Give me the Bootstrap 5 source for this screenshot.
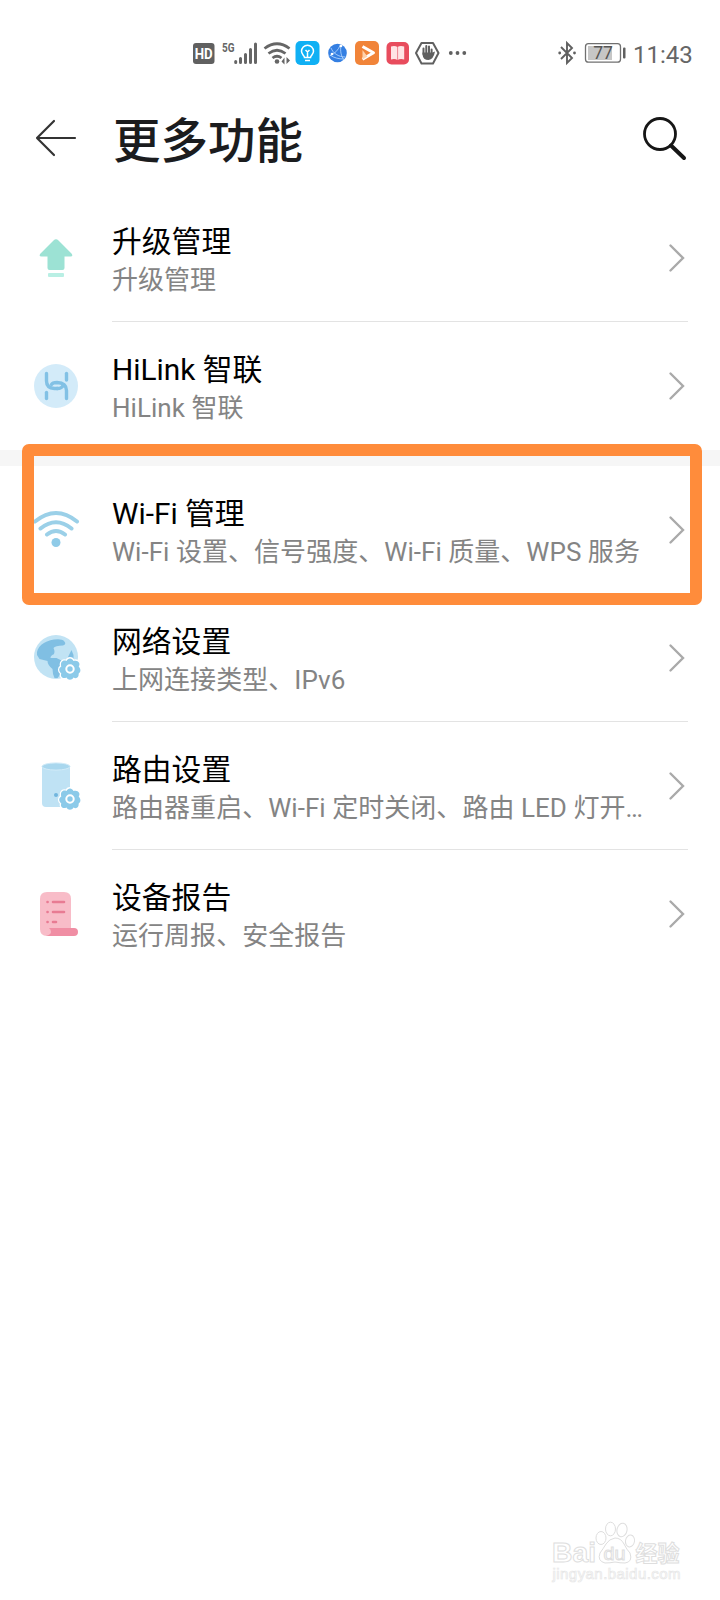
<!DOCTYPE html>
<html lang="zh-CN">
<head>
<meta charset="utf-8">
<meta name="viewport" content="width=device-width, initial-scale=1">
<title>更多功能</title>
<link rel="stylesheet" href="https://cdn.jsdelivr.net/npm/bootstrap@5.3.0/dist/css/bootstrap.min.css">
<style>
body{font-family:Roboto,"Noto Sans CJK SC",sans-serif;background:#fff;color:#000}
.screen{height:1600px;width:720px}
svg{display:block;flex:none}
.status-bar{height:106px;padding-left:192px;padding-right:28px;color:#666}
.clock{font-size:24px;line-height:28px;color:#666;width:59px;white-space:nowrap;padding-top:3px}
.title-bar{height:64px;margin-bottom:24px;padding-left:32px;padding-right:28px}
.title-bar h1{font-size:47.5px;line-height:60px;font-weight:500;color:#1b1c1e;margin-left:35px;padding-top:8px}
.item{height:128px;padding:0 32px}
.item-icon{width:80px;height:128px}
.item-body{border-bottom:1px solid #e3e3e3;padding-top:29px}
.item.plain .item-body{border-color:transparent}
.item-title{font-size:29.8px;line-height:38px;white-space:nowrap}
.item-sub{font-size:26px;line-height:38px;letter-spacing:.04px;color:#848484;white-space:nowrap}
.chev{margin-top:-1px}
.band{height:16px;background:#f6f6f6}
.marker{left:-10px;right:-14px;top:-22px;height:161px;border:12px solid #ff8c3b;border-radius:7px;pointer-events:none}
.marker-host{margin:0 32px;height:128px}
.marker-host .item{padding:0}
.brand{padding-right:30px;padding-bottom:10px}
</style>
</head>
<body>
<div class="screen d-flex flex-column overflow-hidden">
  <header class="status-bar d-flex align-items-center">
    <svg width="28" height="30" viewBox="192 38 28 30"><rect x="193" y="43" width="21.5" height="21" rx="3" fill="#606060"/><text x="203.7" y="59" text-anchor="middle" font-size="15" font-weight="700" textLength="18" lengthAdjust="spacingAndGlyphs" fill="#fff">HD</text></svg>
    <svg width="40" height="30" viewBox="220 38 40 30"><text x="222" y="51.500" font-size="12.5" font-weight="700" textLength="12.5" lengthAdjust="spacingAndGlyphs" fill="#666">5G</text><path d="M235.700 61.500v1M240.500 58.500v4M245.500 54.500v8M250.500 49.500v13M255.500 44v18.500" stroke="#666" stroke-width="3" stroke-linecap="round"/></svg>
    <svg width="34" height="30" viewBox="260 38 34 30"><g fill="none" stroke="#666" stroke-width="2.800"><path d="M264.500 48.500q12.500-9.500 25 0M268.500 53.500q8.500-6.500 17 0M272.500 58q4.500-3.500 9 0"/></g><circle cx="277" cy="61.500" r="2.300" fill="#666"/><path d="M284.500 57.500v7l-3-3zM286.500 64v-7l3.500 3.500z" fill="#666"/></svg>
    <svg width="30" height="30" viewBox="294 38 30 30"><rect x="295.500" y="41" width="24" height="24" rx="5" fill="#10b0f4"/><g fill="none" stroke="#fff" stroke-width="1.500"><path d="M304.500 57.500c0-2-3-3-3-6.200a6 6 0 0 1 12 0c0 3.200-3 4.200-3 6.200zM307.500 57v-5M305.500 50l2 2 2-2M305 60.500h5"/></g></svg>
    <svg width="28" height="30" viewBox="324 38 28 30"><circle cx="337.500" cy="53" r="9.300" fill="#347fe2"/><path d="M329.500 56c5-2 9-6 11-11.500M331 48c2 5 7 9 14.500 9M341 45c-1 6 0 11 3 15M330 55c4 3 9 4 14 4" stroke="#b9dbff" stroke-width=".8" fill="none"/><circle cx="341" cy="46" r="1.300" fill="#fff"/><circle cx="332" cy="54" r="1.300" fill="#fff"/></svg>
    <svg width="31" height="30" viewBox="352 38 31 30"><rect x="355" y="41" width="24" height="24" rx="5" fill="#f18439"/><path d="M362.500 46.500l11 6.300-11 6.400" fill="none" stroke="#fff" stroke-width="3" stroke-linejoin="round"/><path d="M362.500 50v9.500l5-3" fill="#ffd2ac"/></svg>
    <svg width="30" height="30" viewBox="383 38 30 30"><rect x="386.500" y="42" width="22.500" height="22.500" rx="5" fill="#e84c5d"/><path d="M391 46.500q4-1 6.500.5 2.500-1.500 6.700-.5v13q-4-1-6.700.5-2.500-1.500-6.500-.5z" fill="#ffe4e5"/><path d="M397.600 47v13" stroke="#ee8590"/></svg>
    <svg width="31" height="30" viewBox="413 38 31 30"><path d="M421.500 43h11.500l5.500 10-5.500 10.500h-11.500L416 53z" fill="none" stroke="#606060" stroke-width="2" stroke-linejoin="round"/><path d="M423.500 54v-5.500M426.300 53v-7M429 53v-6.500M431.600 54v-4.500" stroke="#606060" stroke-width="2" stroke-linecap="round"/><path d="M422.500 52.500h10l2.500-1q-1.500 8-6.500 8.500-5.500 0-6-5.500z" fill="#606060"/></svg>
    <svg width="26" height="30" viewBox="444 38 26 30" fill="#606060"><circle cx="450.800" cy="53" r="1.900"/><circle cx="457.500" cy="53" r="1.900"/><circle cx="464.300" cy="53" r="1.900"/></svg>
    <svg class="ms-auto" width="26" height="30" viewBox="555 38 26 30"><path d="M561 47l11 11-5 5V43l5 5-11 11" fill="none" stroke="#606060" stroke-width="1.900"/><circle cx="559.700" cy="53" r="1.400" fill="#606060"/><circle cx="574.500" cy="53" r="1.400" fill="#606060"/></svg>
    <svg width="52" height="30" viewBox="581 38 52 30"><rect x="585.500" y="43.700" width="35" height="18.500" rx="3" fill="#fff" stroke="#707070" stroke-width="1.300"/><rect x="588" y="46" width="24" height="14" fill="#c6c6c6"/><rect x="623" y="47.500" width="2.500" height="11" rx="1" fill="#606060"/><text x="603" y="59.300" text-anchor="middle" font-size="17.500" fill="#555">77</text></svg>
    <div class="clock">11:43</div>
  </header>

  <div class="title-bar d-flex align-items-center">
    <svg width="46" height="46" viewBox="32 115 46 46"><path d="M54 121L37 138l17 17M37 138h38" fill="none" stroke="#333" stroke-width="2.200" stroke-linecap="round" stroke-linejoin="round"/></svg>
    <h1 class="mb-0">更多功能</h1>
    <svg class="ms-auto" width="54" height="54" viewBox="638 111 54 54"><circle cx="660" cy="134" r="15.500" fill="none" stroke="#161616" stroke-width="2.800"/><path d="M671 145.500l13 12.500" stroke="#161616" stroke-width="4" stroke-linecap="round"/></svg>
  </div>

  <main>
    <div class="item d-flex">
      <div class="item-icon d-flex align-items-center"><svg width="48" height="48" viewBox="0 -1 48 48"><path d="M21.500 5.500q2.500-2.300 5 0l13.200 13.300q1.700 2.700-1.200 2.700h-6V33q0 2-2 2h-13q-2 0-2-2V21.500h-6q-3 0-1.200-2.700z" fill="#9ce2d4"/><rect x="16" y="38" width="16" height="4" rx="1" fill="#b9efe4"/></svg></div>
      <div class="item-body d-flex flex-grow-1"><div><div class="item-title">升级管理</div><div class="item-sub">升级管理</div></div><svg class="chev ms-auto" width="22" height="72" viewBox="0 0 22 72"><path d="M4.500 23.500L17 36 4.500 48.500" fill="none" stroke="#aaa" stroke-width="2.400" stroke-linecap="round"/></svg></div>
    </div>
    <div class="item plain d-flex">
      <div class="item-icon d-flex align-items-center"><svg width="48" height="48" viewBox="0 0 48 48"><circle cx="24" cy="24" r="22" fill="#d3ebf9"/><g fill="none" stroke="#82c1e5" stroke-width="3.400" stroke-linecap="round"><path d="M14.500 11.500v7.500q0 7 8 7.500h3"/><path d="M14.500 36.500v-6"/><path d="M34.500 11.500v6.500"/><path d="M34.500 36.500v-8q0-7.500-9.500-8-4.500 0-5.500 2"/><path d="M25 26.500q5 0 6-3"/></g></svg></div>
      <div class="item-body d-flex flex-grow-1"><div><div class="item-title">HiLink 智联</div><div class="item-sub">HiLink 智联</div></div><svg class="chev ms-auto" width="22" height="72" viewBox="0 0 22 72"><path d="M4.500 23.500L17 36 4.500 48.500" fill="none" stroke="#aaa" stroke-width="2.400" stroke-linecap="round"/></svg></div>
    </div>
    <div class="band"></div>
    <div class="marker-host position-relative">
      <div class="item plain d-flex">
        <div class="item-icon d-flex align-items-center"><svg width="48" height="48" viewBox="0 0 48 48"><g fill="none" stroke="#9bd0e8" stroke-width="4" stroke-linecap="round"><path d="M3 15.500q21-17 42 0M8.500 22.500q15.500-12.500 31 0M15 28.500q9-7 18 0"/></g><circle cx="24" cy="36.500" r="4.500" fill="#8fcbe8"/></svg></div>
        <div class="item-body d-flex flex-grow-1"><div><div class="item-title">Wi-Fi 管理</div><div class="item-sub">Wi-Fi 设置、信号强度、Wi-Fi 质量、WPS 服务</div></div><svg class="chev ms-auto" width="22" height="72" viewBox="0 0 22 72"><path d="M4.500 23.500L17 36 4.500 48.500" fill="none" stroke="#aaa" stroke-width="2.400" stroke-linecap="round"/></svg></div>
      </div>
      <div class="marker position-absolute"></div>
    </div>
    <div class="item d-flex">
      <div class="item-icon d-flex align-items-center"><svg width="50" height="48" viewBox="0 -1 50 48"><circle cx="24" cy="22" r="22" fill="#c1e3f4"/><path d="M5 20C4 12 12 6 22 4.500q8-1 10 1.500 3 3-1 4.500-8 0-9.500 2.500 2 4 0 6.500-3 1-3 3.500h6l6 3 2 4-3 8-4 5h-3q-2-4-2-9-5-4-5-8l-8-2z" fill="#80bfe3"/><path d="M39.500 15l2 5v5l-6-2z" fill="#80bfe3"/><g id="gear" transform="translate(38 34)"><path d="M-3.500-8C-2-11.500 2-11.500 3.500-8 8-9.500 11-5.500 8.700-2.500 11 0 11 3 8.700 4.500 9 9 6 10 3.500 8.500 2 11.500-2 11.500-3.500 8.500-7 10-10 8-8.700 4.500-11.500 2-11.500-1-8.700-2.500-10-7-7-9.500-3.500-8z" fill="#8bcae9" stroke="#fff" stroke-width="2.600" paint-order="stroke"/><circle r="3.700" fill="none" stroke="#fff" stroke-width="2"/></g></svg></div>
      <div class="item-body d-flex flex-grow-1"><div><div class="item-title">网络设置</div><div class="item-sub">上网连接类型、IPv6</div></div><svg class="chev ms-auto" width="22" height="72" viewBox="0 0 22 72"><path d="M4.500 23.500L17 36 4.500 48.500" fill="none" stroke="#aaa" stroke-width="2.400" stroke-linecap="round"/></svg></div>
    </div>
    <div class="item d-flex">
      <div class="item-icon d-flex align-items-center"><svg width="50" height="52" viewBox="0 1 50 52"><path d="M10 7v37q0 4 4 4h20q4 0 4-4V7z" fill="#bfe2f4"/><ellipse cx="24" cy="7.500" rx="14" ry="3.600" fill="#a9d7ee" stroke="#d2ebf8"/><circle cx="24" cy="36" r="2" fill="#71b5dd"/><use href="#gear" y="6"/></svg></div>
      <div class="item-body d-flex flex-grow-1"><div><div class="item-title">路由设置</div><div class="item-sub">路由器重启、Wi-Fi 定时关闭、路由 LED 灯开…</div></div><svg class="chev ms-auto" width="22" height="72" viewBox="0 0 22 72"><path d="M4.500 23.500L17 36 4.500 48.500" fill="none" stroke="#aaa" stroke-width="2.400" stroke-linecap="round"/></svg></div>
    </div>
    <div class="item plain d-flex">
      <div class="item-icon d-flex align-items-center"><svg width="48" height="48" viewBox="0 0 48 48"><path d="M15 2h17q7 0 7 7v33q0 4-4 4H15q-7 0-7-7V9q0-7 7-7z" fill="#f8bcc8"/><path d="M17 38h25a4 4 0 0 1 0 8H14q5-1.500 5-4t-2-4z" fill="#f08ea4"/><path d="M15.500 12h.1M15.500 22h.1M15.500 32h.1M21 12h11M21 22h11M21 32h3" stroke="#e87b93" stroke-width="2.600" stroke-linecap="round"/></svg></div>
      <div class="item-body d-flex flex-grow-1"><div><div class="item-title">设备报告</div><div class="item-sub">运行周报、安全报告</div></div><svg class="chev ms-auto" width="22" height="72" viewBox="0 0 22 72"><path d="M4.500 23.500L17 36 4.500 48.500" fill="none" stroke="#aaa" stroke-width="2.400" stroke-linecap="round"/></svg></div>
    </div>
  </main>

  <footer class="brand mt-auto d-flex justify-content-end">
    <svg width="140" height="70" viewBox="550 1520 140 70" fill="#fff" stroke="#dedede" stroke-width="1">
      <text x="552" y="1562" font-family="Liberation Sans,sans-serif" font-size="28" font-weight="700" textLength="44" lengthAdjust="spacingAndGlyphs">Bai</text>
      <ellipse cx="601" cy="1538" rx="5" ry="6.500"/><ellipse cx="610.500" cy="1529" rx="5" ry="6.800"/><ellipse cx="622" cy="1530" rx="5" ry="6.800" transform="rotate(12 622 1530)"/><ellipse cx="630" cy="1541" rx="4.500" ry="6" transform="rotate(10 630 1541)"/>
      <path d="M615 1538q6 0 9 6t6 9q3 9-5 10-5 0-10-1-5 1-10 1-8-2-5-10 3-4 6-9t9-6z"/>
      <text x="603.500" y="1560" font-family="Liberation Sans,sans-serif" font-size="19" textLength="22" lengthAdjust="spacingAndGlyphs">du</text>
      <text x="635.500" y="1561" font-family="Noto Sans CJK SC,sans-serif" font-size="22" font-weight="700">经验</text>
      <text x="552.500" y="1579" font-family="Liberation Sans,sans-serif" font-size="15" textLength="128" stroke="#e6e6e6" stroke-width=".7">jingyan.baidu.com</text>
    </svg>
  </footer>
</div>
<script src="https://cdn.jsdelivr.net/npm/bootstrap@5.3.0/dist/js/bootstrap.bundle.min.js"></script>
</body>
</html>
